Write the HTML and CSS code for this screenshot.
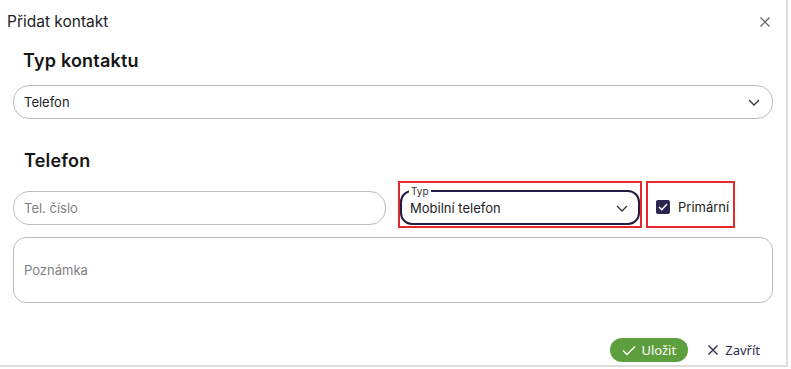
FILE: index.html
```html
<!DOCTYPE html>
<html>
<head lang="cs">
    <meta charset="UTF-8">
    <title>Přidat kontakt</title>
    <link rel="stylesheet" href="styles.css">
</head>
<body>
    <div class="dialog">
        <div class="dialog-head">
            <span class="dialog-title">Přidat kontakt</span>
            <span class="dialog-close">
                <svg width="10" height="10" viewBox="0 0 10 10"><path d="M0.5 0.5 L9.5 9.5 M9.5 0.5 L0.5 9.5" stroke="#555" stroke-width="1.1" fill="none"/></svg>
            </span>
        </div>
        <div class="dialog-body">
            <h2 class="section-title first">Typ kontaktu</h2>
            <div class="field select">
                <span>Telefon</span>
                <svg width="12" height="7" viewBox="0 0 12 7"><path d="M1 1 L6 6 L11 1" stroke="#333" stroke-width="1.3" fill="none"/></svg>
            </div>

            <h2 class="section-title">Telefon</h2>
            <div class="phone-row">
                <div class="field phone">
                    <span class="placeholder">Tel. číslo</span>
                </div>
                <div class="marked type-box">
                    <fieldset class="outlined">
                        <legend>Typ</legend>
                        <span>Mobilní telefon</span>
                        <svg width="12" height="7" viewBox="0 0 12 7"><path d="M1 1 L6 6 L11 1" stroke="#333" stroke-width="1.3" fill="none"/></svg>
                    </fieldset>
                </div>
                <div class="marked primary-box">
                    <span class="checkbox">
                        <svg width="10" height="8" viewBox="0 0 10 8"><path d="M1 4 L3.8 6.8 L9 1" stroke="#fff" stroke-width="1.4" fill="none"/></svg>
                    </span>
                    <span>Primární</span>
                </div>
            </div>

            <div class="field note">
                <span class="placeholder">Poznámka</span>
            </div>
        </div>
        <div class="dialog-foot">
            <button class="btn btn-save">
                <svg width="14" height="11" viewBox="0 0 14 11"><path d="M1 5.5 L5 9.5 L13 1.5" stroke="#fff" stroke-width="1.4" fill="none"/></svg>
                Uložit
            </button>
            <button class="btn btn-close">
                <svg width="10" height="10" viewBox="0 0 10 10"><path d="M0.5 0.5 L9.5 9.5 M9.5 0.5 L0.5 9.5" stroke="#2d2b4e" stroke-width="1.3" fill="none"/></svg>
                Zavřít
            </button>
        </div>
    </div>
</body>
</html>
```

FILE: styles.css
```css
*{
    padding: 0;
    margin: 0;
    box-sizing: border-box;
}
body{
    background: #fff;
    font-family: Inter, "Noto Sans", sans-serif;
    color: #1e1e1e;
}
.dialog{
    width: 788px;
    height: 367px;
    border-right: 2px solid #dcdcdc;
    border-bottom: 2px solid #dcdcdc;
    display: flex;
    flex-direction: column;
}
.dialog-head{
    height: 42px;
    display: flex;
    align-items: center;
    justify-content: space-between;
    padding: 0 16px 0 7px;
}
.dialog-title{
    font-size: 15.5px;
    color: #222;
}
.dialog-close{
    display: flex;
    margin-top: 1px;
}
.dialog-body{
    padding: 0 13px;
    display: flex;
    flex-direction: column;
}
.section-title{
    font-size: 18px;
    font-weight: 600;
    line-height: 24px;
    margin: 30px 0 8px 11px;
    color: #161616;
    letter-spacing: 0.2px;
}
.section-title.first{
    margin-top: 7px;
    margin-left: 10px;
    margin-bottom: 12px;
}
.field{
    border: 1px solid #bdbdbd;
    border-radius: 16px;
    height: 34px;
    display: flex;
    align-items: center;
    padding: 0 10px;
    font-size: 13px;
    color: #222;
}
.select{
    justify-content: space-between;
    padding-right: 12px;
}
.placeholder{
    color: #808080;
}
.phone-row{
    display: flex;
    align-items: stretch;
    height: 47px;
}
.phone{
    width: 373px;
    margin-top: 10px;
    height: 34px;
    margin-right: 12px;
}
.marked{
    border: 2px solid #e8272b;
}
.type-box{
    width: 244px;
    padding-top: 2px;
}
.outlined{
    border: 2px solid #211d45;
    border-radius: 12px;
    height: 40px;
    display: flex;
    align-items: center;
    justify-content: space-between;
    padding: 0 10px 0 8px;
    font-size: 13px;
    color: #222;
}
.outlined legend{
    font-size: 10px;
    line-height: 12px;
    padding: 0 2px;
    margin-left: -1px;
    color: #333;
}
.outlined span,
.outlined svg{
    margin-top: -4px;
}
.primary-box{
    width: 89px;
    margin-left: 4px;
    display: flex;
    align-items: center;
    padding: 5px 0 0 8px;
    font-size: 13px;
    color: #222;
    gap: 8px;
}
.checkbox{
    width: 14px;
    height: 14px;
    background: #2a2650;
    border-radius: 2px;
    display: flex;
    align-items: center;
    justify-content: center;
    margin-top: -1px;
}
.note{
    height: 66px;
    margin-top: 9px;
    border-radius: 13px;
}
.dialog-foot{
    margin-top: auto;
    display: flex;
    justify-content: flex-end;
    align-items: center;
    padding: 0 14px 3px 0;
    gap: 10px;
}
.btn{
    border: none;
    background: none;
    font-family: "Noto Sans", Inter, sans-serif;
    font-size: 13px;
    height: 24px;
    display: flex;
    align-items: center;
    gap: 5px;
    cursor: pointer;
}
.btn-save{
    width: 78px;
    background: #5d9e3d;
    color: #fff;
    border-radius: 12px;
    justify-content: center;
}
.btn-close{
    color: #2d2b4e;
    padding: 0 12px 0 10px;
    gap: 7px;
}
```
